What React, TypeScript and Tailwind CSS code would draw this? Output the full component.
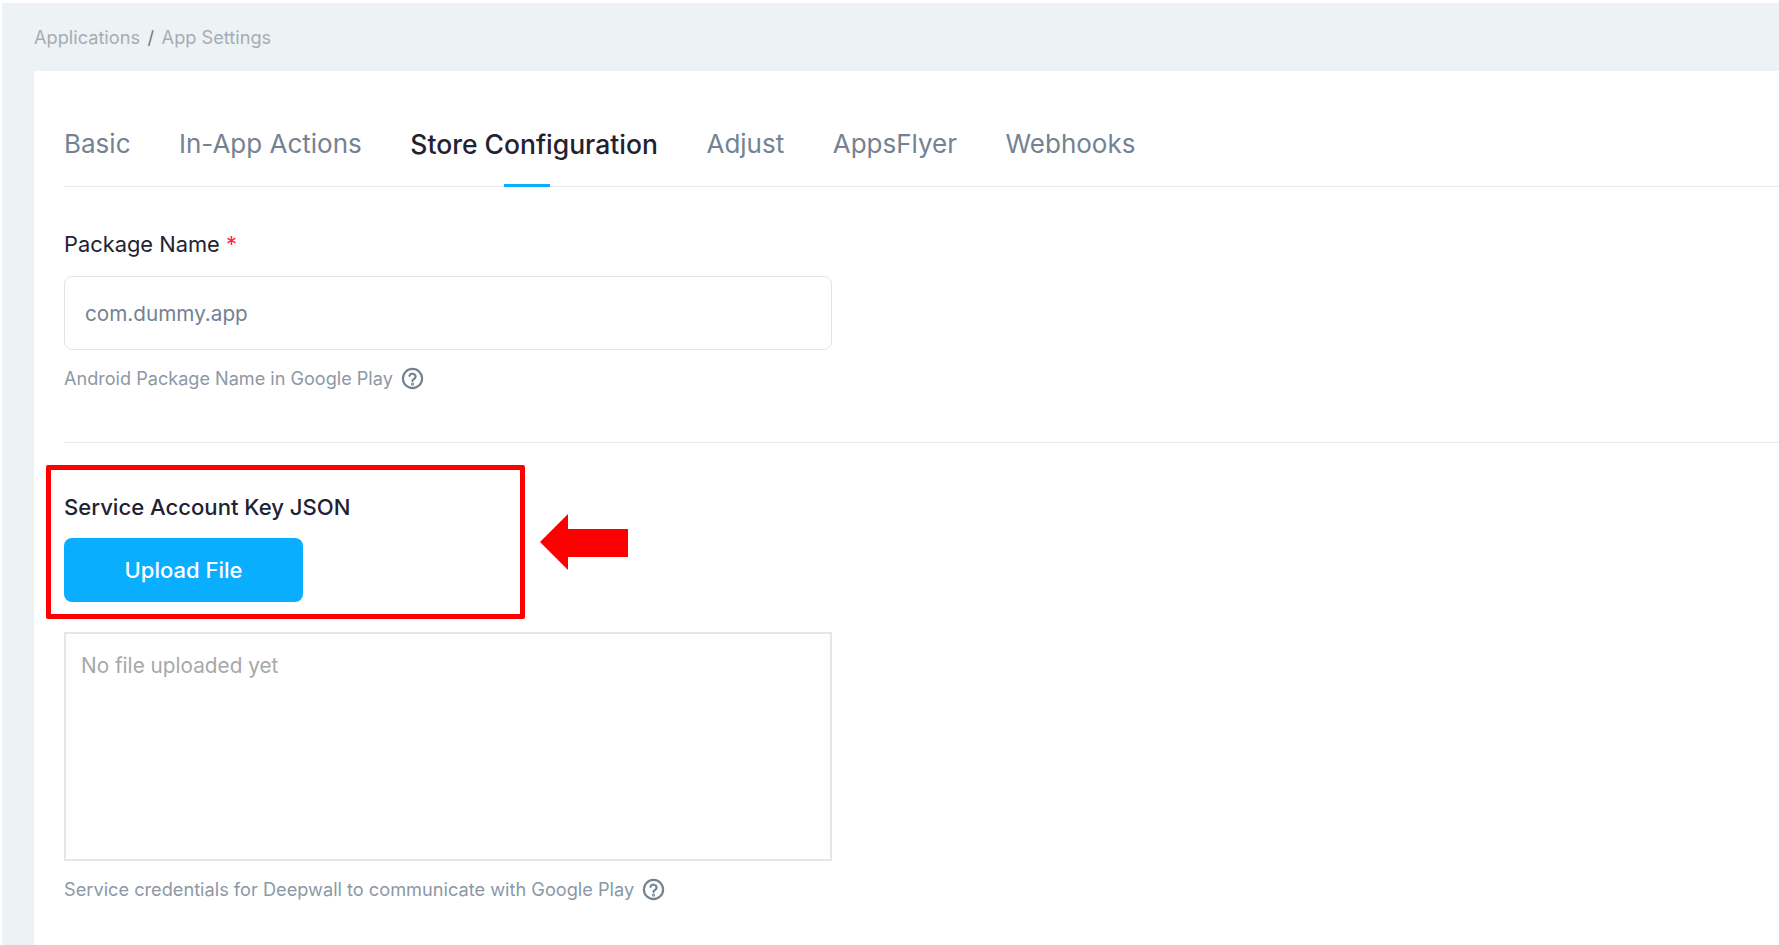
import React from "react";

function Help({ className }: { className: string }) {
  return (
    <svg viewBox="0 0 24 24" width="23" height="23" fill="none" stroke="#748293" strokeWidth="2.3" strokeLinecap="round" className={className}>
      <circle cx="12" cy="12" r="10" />
      <path d="M8.8 9.2a3.3 3.3 0 0 1 6.4 1c0 2.2-3.2 2.6-3.2 4.3" />
      <circle cx="12" cy="17.8" r="0.5" fill="#748293" />
    </svg>
  );
}

const tabs = ["Basic", "In-App Actions", "Store Configuration", "Adjust", "AppsFlyer", "Webhooks"];

export default function App() {
  return (
    <div className="h-[945px] w-[1779px] overflow-hidden bg-white pt-[3px] pl-[2px] font-['Inter',sans-serif]">
      <div className="relative h-[942px] bg-[#edf2f5]">
        <div className="flex h-[68px] items-center pl-[32px] text-[18.2px] leading-none text-[#a5adb5]">
          <span>Applications</span>
          <span className="mx-[7.5px] text-[#6b7580]">/</span>
          <span>App Settings</span>
        </div>
        <div className="ml-[32px] h-[874px] bg-white pl-[30px]">
          <div className="flex h-[116px] items-end gap-[48.5px] border-b border-[#e4e9ec]">
            {tabs.map((t) => (
              <div
                key={t}
                className={
                  "relative h-[60px] leading-[36px] " +
                  (t === "Store Configuration" ? "text-[26.5px] font-medium text-[#1f2233]" : "text-[26px] text-[#748293]")
                }
              >
                {t}
                {t === "Store Configuration" && (
                  <div className="absolute bottom-[-1px] left-[94px] h-[3px] w-[46px] bg-[#0aaeff]" />
                )}
              </div>
            ))}
          </div>
          <div className="pt-[43px]">
            <div className="text-[21.85px] leading-[28px] text-[#1f2233]">
              Package Name <span className="text-[#ff1f4b]">*</span>
            </div>
            <div className="mt-[18px] flex h-[74px] w-[768px] items-center rounded-[8px] border border-[#dfe5ea] pt-[2px] pl-[20px] text-[20.7px] text-[#748293]">
              com.dummy.app
            </div>
            <div className="mt-[14px] flex items-center gap-[8px] text-[18.1px] leading-[28px] text-[#8c98a6]">
              Android Package Name in Google Play
              <Help className="shrink-0" />
            </div>
            <div className="mt-[50px] h-px bg-[#e4e9ec]" />
            <div className="mt-[50px] text-[22.1px] font-medium leading-[28px] text-[#1f2233]">Service Account Key JSON</div>
            <button className="mt-[17px] block h-[64px] w-[239px] rounded-[8px] bg-[#0aaeff] pt-[1px] text-[22px] font-medium text-white">
              Upload File
            </button>
            <div className="mt-[30px] h-[229px] w-[768px] border-2 border-[#e2e7eb] px-[15px] py-[18px] text-[20.75px] leading-[28px] text-[#a8a8a8]">
              No file uploaded yet
            </div>
            <div className="mt-[14px] flex items-center gap-[8px] text-[18.2px] leading-[28px] text-[#8c98a6]">
              Service credentials for Deepwall to communicate with Google Play
              <Help className="shrink-0" />
            </div>
          </div>
        </div>
        <div className="absolute left-[44px] top-[462px] h-[154px] w-[479px] rounded-[2px] border-[5px] border-[#ff0000]" />
        <svg className="absolute left-[538px] top-[511px]" width="90" height="56" viewBox="0 0 90 56">
          <path d="M0 28 L28 0 V15 H88 V43 H28 V56 Z" fill="#ff0000" />
        </svg>
      </div>
    </div>
  );
}
